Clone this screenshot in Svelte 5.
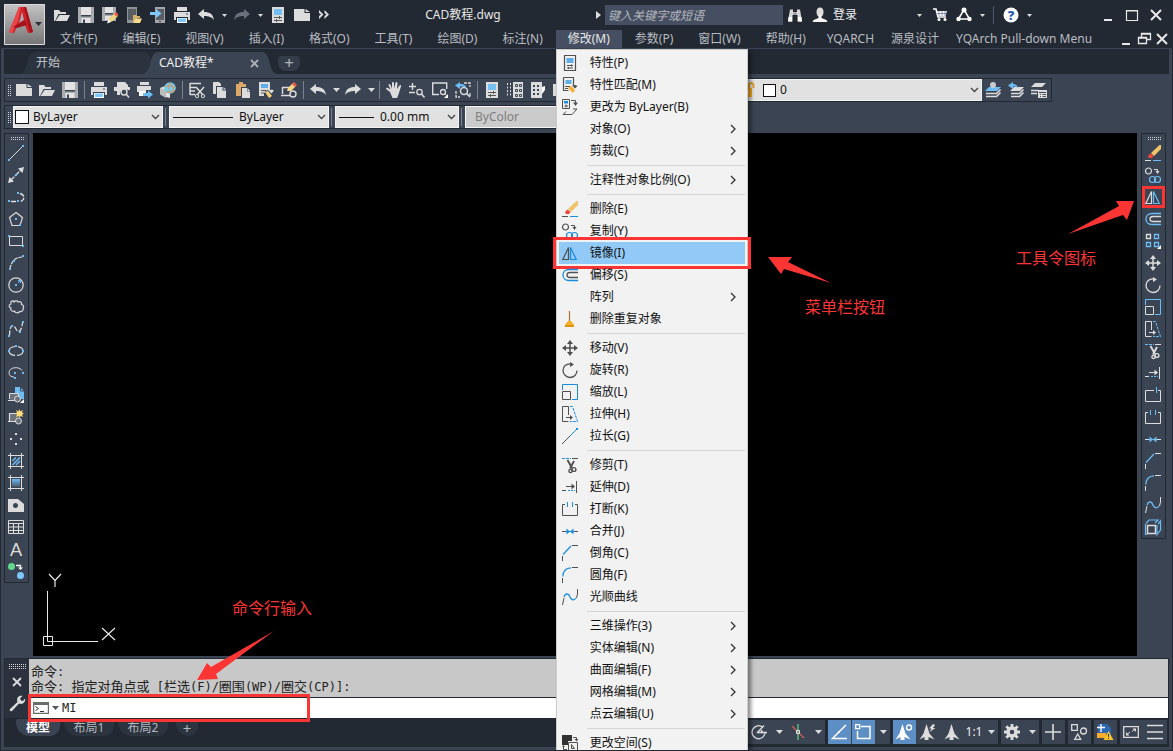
<script>
  const M = 'currentColor';
  const A = 'var(--accent)';
  const line = (d, c = M, extra = '') => `<path d="${d}" fill="none" stroke="${c}" ${extra}/>`;
  const fill = (d, c = M, extra = '') => `<path d="${d}" fill="${c}" ${extra}/>`;
  const dot = (x, y, c = A) => `<rect x="${x}" y="${y}" width="2" height="2" fill="${c}"/>`;

  const scissors =
    line('M5.500 3l4.500 8M12 4l-4 7.500', M, 'stroke-width="1.900"') +
    `<circle cx="12" cy="12.500" r="1.900" fill="none" stroke="${M}" stroke-width="1.400"/><circle cx="8.500" cy="14" r="1.600" fill="none" stroke="${M}" stroke-width="1.400"/>`;
  const layers =
    fill('M4 5h12l-4 4H0z', A) +
    line('M1 11.500h10.500l4-4M1 14.500h10.500l4-4', M, 'stroke-width="1.600"');

  const icons = {
    new: fill('M0 2h10.500v4H16v8H0z') + fill('M11.500 2L16 5h-4.500z'),
    open: fill('M0 14V3h5l1.500 2H12v2H4.500L1 14z') + fill('M5.500 8H16l-3 6H1.500z'),
    save: fill('M0 0h16v16H0z', '#a9abae') + fill('M3 0h10v8H3z', '#e3e3e3') + fill('M3 8h10v1.500H3z', '#3b4453') + fill('M3.500 11h9v5h-9z', '#e3e3e3') + fill('M5 12.500h2V16H5z', '#3b4453'),
    saveas: fill('M0 0h14v14H0z', '#a9abae') + fill('M3 0h8v6H3z', '#e3e3e3') + fill('M3 6h8v1.500H3z', '#3b4453') + fill('M3 9h6v4H3z', '#e3e3e3') + fill('M6 15.500l1-4 6-5.500 3 3-6 5.500z', '#f2d583') + fill('M12 7l2-2 2.500 2.500-2 2z', '#f0584c') + fill('M5 16.500l1.500-4 2.500 2.500z', '#fff'),
    openweb: fill('M1 0h10v16H1z', '#8f9296') + fill('M2 2h8v11H2z', '#5a5d62') + fill('M7 16V8h3l1 1h3v2h-4z', '#d8b06a') + fill('M9.500 11.500H16L14 16H7.500z', '#ffdf8e'),
    saveweb: fill('M5 0h10v16H5z', '#a2a5a9') + fill('M6 2h8v11H6z', '#5a5d62') + fill('M0 5h6V2l5.500 4.500L6 11V8H0z', '#7cc8ff') + fill('M9 14h2v1H9z', '#3b4453'),
    print: fill('M3 0h10v4H3z') + fill('M0 5h16v8h-2v-3H2v3H0z') + fill('M3 11h10v5H3z', '#fff') + fill('M4 11.500h8V15H4z', '#7cc8ff') + fill('M12 6.500h2v1h-2z', '#3b4453'),
    undo: fill('M0 7l6-5v3c6 0 9 2 10 8-2.500-3-5-4-10-4v3z'),
    redo: fill('M16 7l-6-5v3C4 5 1 7 0 13c2.500-3 5-4 10-4v3z'),
    props: fill('M2 0h12v16H2z') + fill('M4 2h8v6H4z', '#74c0f5') + line('M4 10.500h8M4 13.500h8', '#555') + fill('M9 9h1v3H9zM6 12h1v3H6z', '#555'),
    more: fill('M1 3l4.500 4.500L1 12V9l2-1.500L1 6zM6.500 3L11 7.500 6.500 12V9l2-1.500-2-1.500z'),
    preview: fill('M3 0h8l3 3v2h2v3h-2a5 5 0 0 0-8 3v2H3V9H0V5h3z') + `<circle cx="10" cy="10" r="3" fill="#3b4453" stroke="${M}" stroke-width="1.400"/>` + line('M12 12l3 3.500', M, 'stroke-width="1.600"'),
    publish: fill('M3 0h9v3H3z') + fill('M0 4h14v4H9v2H0z') + fill('M2 9h7v5H2z', '#fff') + fill('M6 11h5V8.500l5 4-5 4V14H6z', '#6cbcf5'),
    globe: fill('M0 6l5-2 5 4v8l-4-1-6-3z', '#e3e3e3') + fill('M0 6l6 2v8l-6-3.500z', '#bcbcbc') + `<circle cx="10" cy="6" r="5.800" fill="#6fd0ee"/>` + line('M5 5c4-2 8-1 10.500 1M6 10c4 1 7 0 9-2M10 1c-2 4-2 7 1 10M10 1c4 3 4 7 2 10', '#e88d5a'),
    cut: line('M1 1.500h11M1 5.500h6M1 9h5M1 12.500h5M1 1v12', M, 'stroke-width="1.400"') + line('M7 5l7 8M15 5l-7 8', M, 'stroke-width="1.500"') + `<circle cx="8" cy="14" r="1.700" fill="none" stroke="${M}"/><circle cx="14" cy="14" r="1.700" fill="none" stroke="${M}"/>`,
    copyclip: fill('M1 0h6l2 2v2H4v8H1z') + fill('M5 5h5.500v3.500H14V16H5z') + fill('M11.500 5l2.500 2.500h-2.500z'),
    paste: fill('M1 2h3V0h4v2h3v3H6v9H1z', '#dba868') + fill('M7 6h5v3.500h3V16H7z') + fill('M12.500 6l2.500 3h-2.500z'),
    match: line('M1.500.5h10v8M1.500.5v13h5', M, 'stroke-width="1.200"') + fill('M3.500 3h6v4h-6z', '#5faee8') + line('M3 9.500h5M3 11.500h3', M) + fill('M6 11l3-2 4 4-2 3z', '#f9ac2b') + fill('M10 8.500l3 3L15.500 9l-2-1z'),
    matchdark: fill('M1 0h11v9L9 8 6 11v3H1z') + fill('M3 2h7v4H3z', '#5faee8') + line('M3 8.500h5M3 11h3', '#555') + fill('M7 10l3-1 4 5-3 2z', '#f7d07a') + fill('M10.500 8.500l3 3 2.500-3-2-1z'),
    blockedit: line('M1.500 12V5.500H9M0 13.500h10', M, 'stroke-width="1.400"') + `<circle cx="12" cy="12" r="3" fill="none" stroke="${M}" stroke-width="1.400"/>` + fill('M6 9l1-3 5-5 3 3-5 5z', '#f7d68a') + fill('M11 2l2-2 3 3-2 2z', '#f0584c'),
    pan: fill('M4 10L0 7c0-1 1-1.500 2-1l2.500 1.500L2.500 3c0-1.500 1.500-1.500 2 0L6 6.500V1c0-1.500 2-1.500 2 0v5.500L9.500 1c.5-1.500 2-1 2 .5L11 7l2.500-3.500c1-1 2 0 1.500 1l-2.500 8L11 16H6.500z'),
    zoomrt: line('M0 4.500h7M3.500 1v7M0 10.500h6', M, 'stroke-width="1.400"') + `<circle cx="10.500" cy="10" r="2.700" fill="none" stroke="${M}" stroke-width="1.300"/>` + line('M12.500 12l3 3.500', M, 'stroke-width="1.600"'),
    zoomwin: line('M7 12.500H.7V1h14v6', M, 'stroke-width="1.400"') + `<circle cx="11" cy="10" r="2.500" fill="none" stroke="${M}" stroke-width="1.300"/>` + fill('M16 12v4h-4z', '#fff') + line('M12.500 11.500l2 2'),
    zoomprev: line('M9 1h6v4M1 9v6h4M15 11v4', M, 'stroke-width="1.300" stroke-dasharray="3 1"') + `<circle cx="9" cy="9" r="3.500" fill="none" stroke="${M}" stroke-width="1.500"/>` + line('M11.500 11.500L15 15', M, 'stroke-width="1.600"') + fill('M0 3.500L5 0v2c4 0 6 1 6 4-2-1.500-3-1.500-6-1.500V7z', '#6cbcf5'),
    palette: line('M.500 1v14M3.500 1v14', M, 'stroke-dasharray="2 1.500"') + fill('M6 0h10v16H6z') + `<g fill="none" stroke="#3b4453"><path d="M8.500 2.500h2v2h-2zM12.500 2.500h2v2h-2zM8.500 7.500h2v2h-2zM12.500 7.500h2v2h-2zM8.500 12.500h2v2h-2zM12.500 12.500h2v2h-2z"/></g>`,
    design: fill('M1 0h11v16H1z') + fill('M3 3h2v2H3zM7 3h2v2H7zM3 7h2v2H3zM7 7h2v2H7zM3 11h2v2H3zM7 11h2v2H7z', '#3b4453') + fill('M12 5l3-1v4l-3 4z', '#fff'),
    layerstate: layers + `<circle cx="8" cy="3" r="3" fill="#c9cccf"/>`,
    layerprev: fill('M6 5h10l-4 4H2z') + line('M3 11.500h8.500l4-4M3 14.500h8.500l4-4', M, 'stroke-width="1.600"') + fill('M0 3.500L5 0v2c3 0 4 1 5 4-2-1.500-3-1.500-5-1.500V7z', '#6cbcf5'),
    layerprops: fill('M4 1h11l-4 4H0z') + line('M0 8.500h8M0 11.500h6', M, 'stroke-width="1.600"') + fill('M7 8h9v8H7z') + line('M8 10.500h7', '#3b4453') + line('M9 12.500h1M11.500 12.500H15M9 14.500h1M11.500 14.500H15', '#555'),
    line: line('M2 14L14 2') + dot(0, 14) + dot(14, 0),
    xline: line('M2 14L14 2', M, 'stroke-width="1.300" stroke-dasharray="6 1"') + fill('M0 16l1.500-6L6 14.500zM16 0l-1.500 6L10 1.500z') + dot(7, 7),
    pline: line('M3 12.500h6M12 4.500c5 1 5 7 0 8', M, 'stroke-width="1.300" stroke-dasharray="5 1"') + dot(0, 11) + dot(9, 3) + dot(9, 11),
    polygon: line('M8 1.500l6.500 5-2.500 8H4L1.500 6.500z', M, 'stroke-width="1.200"') + dot(7, 7) + dot(11, 13),
    rect: line('M1.500 3.500h13v9h-13z') + dot(0, 2) + dot(14, 12),
    arc: line('M2 14C3 7 7 2 14.500 2', M, 'stroke-width="1.200" stroke-dasharray="4 1"') + dot(1, 13) + dot(5, 5) + dot(14, 0),
    circle: `<circle cx="8" cy="8" r="7.200" fill="none" stroke="${M}" stroke-width="1.200"/>` + dot(7, 7) + line('M10 6l2-2', A) + fill('M9.500 3H13v3.500z', A),
    cloud: line('M3 5C2 2 5 1 6 3c1-2 4-1 4 0 3-1 4 1 3.500 2.500C16 6 16 8 15 9c1 2-1 4-3 3.500C10 14.500 7 14 6.500 12 4 13 2 11 3 9 .5 8.500.5 5.500 3 5z', M, 'stroke-width="1.200"'),
    spline: line('M1.500 14.500C2 1 6 4 8 8s5 4 6.500-6', M, 'stroke-width="1.300" stroke-dasharray="5 1.500"') + dot(0, 14) + dot(3, 4) + dot(11, 10) + dot(14, 0),
    ellipse: `<ellipse cx="8" cy="8" rx="7" ry="4.500" fill="none" stroke="${M}" stroke-width="1.200" stroke-dasharray="8 2 7 2 8 2"/>` + dot(7, 2) + dot(0, 7) + dot(14, 7),
    ellipsearc: line('M14 5.500C11.500 1 1 2 1 7.500c0 3 2 4.500 5 4.500', M) + dot(6, 7) + dot(14, 7) + dot(6, 12),
    insert: fill('M7 0h5l4 4v8H7z', '#6cbcf5') + line('M12.500 0v4H16', '#3b4453') + fill('M2 6h9v7H2z', '#6d737c') + line('M1.500 12V6.500h9V9M0 13.500h8', M) + `<circle cx="9.500" cy="12" r="3" fill="#6d737c" stroke="${M}"/>` + fill('M16 12v4h-4z', '#fff'),
    block: fill('M2 5h8v7H2z', '#6d737c') + line('M1.500 12V4.500h7M0 12.500h8', M, 'stroke-width="1.200"') + `<circle cx="10.500" cy="12" r="3" fill="#6d737c" stroke="${M}"/>` + fill('M11.500 0l1 2.500L15 1l-1 2.500 2 1-2 1 1 2.500-2.500-1-1 2-1-2L8 8l1-2.500-2-1 2-1L8 1l2.500 1.500z', '#ffdb7c'),
    point: dot(7, 2, M) + dot(2, 7, M) + dot(12, 7, M) + dot(7, 12, M),
    hatch: line('M2.500 0v16M13.500 0v16M0 2.500h16M0 13.500h16') + line('M4.500 8L8 4.500M4.500 12L12 4.500M8 12l4-4', A, 'stroke-width="1.600"'),
    gradient: `<defs><linearGradient id="gr" x2="0" y2="1"><stop stop-color="#6cbcf5"/><stop offset="1" stop-color="#4b5563"/></linearGradient></defs>` + line('M2.500 0v16M13.500 0v16M0 2.500h16M0 13.500h16') + fill('M4 4h8v8H4z', 'url(#gr)'),
    region: `<path fill-rule="evenodd" fill="${M}" d="M0 2h10l6 5v8H0zM7.500 6a2.500 2.500 0 1 0 .01 0z"/>`,
    table: line('M.5 1.500h15v13H.5zM0 4.500h16M0 8h16M0 11.500h16M5.500 5v9M10.500 5v9'),
    mtext: `<text x="8" y="15" text-anchor="middle" font-family="Lato, sans-serif" font-size="18" fill="${M}">A</text>`,
    addsel: `<circle cx="3.500" cy="3.500" r="3.500" fill="#62d98b"/><circle cx="12.500" cy="12.500" r="3.500" fill="#7cc8ff"/>` + line('M8 2.500h4.500V5', '#fff', 'stroke-width="1.300"') + fill('M10 4.500h5L12.500 7z', '#fff'),
    erase: fill('M14.500 0H16v4l-7 7-3-3z', '#f2c469') + fill('M5.500 8.500L8.500 11 7 13H4L3 11z', '#f0473d') + line('M0 15.500h6') + line('M8 15.500h8', A),
    copy: `<circle cx="3.500" cy="4" r="3" fill="none" stroke="${M}" stroke-width="1.200"/><circle cx="7.500" cy="12.500" r="3" fill="none" stroke="${A}" stroke-width="1.200"/><circle cx="12.500" cy="12.500" r="3" fill="none" stroke="${A}" stroke-width="1.200"/>` + line('M9 2.500h3.500v2') + fill('M10.500 4h4L12.500 7z'),
    mirror: line('M6.500 2.500v12H.8z', M, 'stroke-width="1.200"') + line('M8.500 2.500v12h5.700z', A, 'stroke-width="1.200"'),
    offset: line('M16 2.500H7c-8 0-8 11 0 11h9', A, 'stroke-width="1.300"') + line('M16 5.500H8c-4 0-4 5 0 5h8', M, 'stroke-width="1.300"'),
    array: line('M1.500 1.500h4v4h-4z', M, 'stroke-width="1.300"') + line('M9.500 1.500h4v4h-4zM1.500 9.500h4v4h-4zM9.500 9.500h4v4h-4z', A, 'stroke-width="1.300"') + fill('M16 12v4h-4z', '#fff'),
    move: line('M8 2v12M2 8h12', M, 'stroke-width="1.500"') + fill('M8 0l3 4H5zM8 16l3-4H5zM0 8l4-3v6zM16 8l-4-3v6z'),
    rotate: line('M9.500 2C4 1 1 5 1 8.500S4 15.500 8 15.500s7-3 7-7', M, 'stroke-width="1.300"') + fill('M8 0l4 2.500L8 5z'),
    scale: line('M.5 6V.5h15v15H10', A) + line('M.5 7.500h8v8h-8z'),
    stretch: line('M6.500 9V.5h-6v15h6') + line('M8 .5h2.500l5 15H8', A, 'stroke-dasharray="3 1"') + line('M4 11.500h6') + fill('M8 9l3 2.500L8 14z'),
    lengthen: line('M0 16l8-8') + line('M8 8l6-6', A) + dot(14, 0),
    trim: line('M0 1.500h9', A, 'stroke-dasharray="3 1"') + line('M10 1.500h6') + scissors,
    extend: line('M0 11.500h4M4 7.500h7M14.500 2v12') + line('M6 11.500h7', A, 'stroke-dasharray="2 1"') + fill('M9.500 4.500L13 7.500l-3.500 3z'),
    breakpt: line('M9 3.500H.5v11h15v-11H13') + line('M11.500 0v6', A),
    break: line('M3 3.500H.5v11h15v-11H13') + line('M5.500 1v5M10.500 1v5', A),
    join: line('M0 8.500h4M12 8.500h4') + line('M4 8.500h8', A) + fill('M4.500 5.500L8 8.500l-3.500 3zM11.500 5.500L8 8.500l3.500 3z', A),
    chamfer: line('M.5 16v-5M10 .5h6') + line('M1 9.500L9 1', A, 'stroke-width="1.200"'),
    fillet: line('M.5 16v-5M10 .5h6') + line('M.8 9.500C1 4 4 1 9 .8', A, 'stroke-width="1.200"'),
    blend: line('M.5 16L2 9M15.500 0v5l-1 4') + line('M2 8c2-5 5-3 6 0s4 4 6 1', A, 'stroke-width="1.300"'),
    explode: line('M2.500 6.500h8v8h-8z', M, 'stroke-width="1.500"') + line('M.500 5v10.500H2M1 4.500L4 1h9l-3 3M13 5l2.500-3v9L12 15.500V6', A, 'stroke-width="1.200"'),
    bylayer: line('M.5.500h7v9h-7z') + fill('M2 2h4v2.500H2z', '#1a8ce0') + line('M2.500 7h3.500M4 5.500v3') + line('M9 1.500h4.500V4') + fill('M11 3.500h5L13.500 7z') + line('M4 12.500L1 15.500h9l5-5.500h-4'),
    purge: line('M7.500 0v10', '#a86f3c', 'stroke-width="1.200"') + fill('M6 10h3l3 4H3z', '#f7b023') + fill('M3 14h9v2H3z', '#dd9410'),
    chspace: fill('M0 0h10v6H6v4H0z', '#333') + line('M6.500 7.500h9v8h-9z') + line('M9.500 13.500V9.500l3 4zM11 2.500h3.500V6M1.500 11v3.500H5') + fill('M12.500 4h4L14.500 6.500zM0 12h3L1.500 10z'),
    mprops: line('M2.500.5h11v15h-11z', M, 'stroke-width="1.200"') + fill('M4.500 3h7v5h-7z', '#5faee8') + line('M5 10.500h6M5 13h6M9.500 9.500v2M6.500 12v2'),
    polar: line('M12 3.500A6.500 6.500 0 1 0 14 9', M, 'stroke-width="1.300"') + line('M6 9L13 1.500M6 8.500h10', M, 'stroke-width="1.300"') + fill('M9 5l3 2-1 3z'),
    iso: line('M2 2l12 12', '#d0605f', 'stroke-width="1.300"') + line('M8 0v16', '#5ecb8a', 'stroke-width="1.300"') + line('M6.500 6.500h3v3h-3z', '#e3e3e3'),
    otrack: line('M15 1L1.500 14.500H16', '#fff', 'stroke-width="1.500"') + dot(7, 7, '#fff'),
    osnap: line('M6 2.500h9v12H2.500V7', '#fff', 'stroke-width="1.500"') + line('M.7.700h4v4h-4z', '#fff', 'stroke-width="1.300"'),
    annovis: fill('M6.500 0L9.500 9.500l5 6-6-2.500v3h-4v-3L-.500 15.500l4-6z') + `<circle cx="13" cy="3.500" r="2.500" fill="none" stroke="${M}" stroke-width="1.400"/>`,
    annoauto: fill('M6.500 0L9.500 9.500l5 6-6-2.500v3h-4v-3L-.500 15.500l4-6z') + fill('M13 0l-4 4.500h2.500L9.500 8 15.500 4H13l2-3z'),
    anno: fill('M7.500 0L10.500 9.500l5 6-6-2.500v3h-4v-3L.500 15.500l4-6z'),
    gear: `<circle cx="8" cy="8" r="4" fill="none" stroke="${M}" stroke-width="3.500"/>` + line('M8 0v4M8 12v4M0 8h4M12 8h4M2.300 2.300l2.500 2.500M11.200 11.200l2.500 2.500M2.300 13.700l2.500-2.500M11.200 4.800l2.500-2.500', M, 'stroke-width="2.800"'),
    plus: line('M8 0v16M0 8h16', M, 'stroke-width="1.600"'),
    units: line('M.7.700h5.600v5.600H.7zM3.700 15.300h6L6.700 10z', M, 'stroke-width="1.300"') + `<circle cx="12.500" cy="7" r="3" fill="none" stroke="${M}" stroke-width="1.300"/>`,
    warn: fill('M1 0h9l4 4v10H1z', '#2d68b0') + fill('M0 9h9v5H0z', '#f9ac2b') + line('M4 0v8M0 3.500h8', '#fff', 'stroke-width="1.300"') + fill('M11.500 7l5 9h-10z', '#f8c22b') + fill('M11 10h1v3h-1zM11 14h1v1h-1z', '#333'),
    full: line('M.7 2.700h14.600v10.600H.7z', M, 'stroke-width="1.300"') + line('M4 10.500l3-2.500M9 7.500l3-2.500') + fill('M3 8v3.500h3.500zM13 8V4.500H9.500z'),
    menu: line('M0 1.500h16M0 8h16M0 14.500h16', M, 'stroke-width="1.700"'),
    find: fill('M3 2.500h3V5h4V2.500h3l2 12h-4.500V8h-5v6.500H1z', '#d8d8d8') + fill('M1.500 10h3.500v4.500H1zM11 10h3.500l.5 4.500h-4z', '#fff') + fill('M6.500 5.500h3V8h-3z', '#8d929a'),
    user: `<ellipse cx="8" cy="5" rx="3.500" ry="4.500" fill="#dedede"/>` + fill('M6.500 8h3v3l5 2 1 2H.500l1-2 5-2z', '#f4f4f4'),
    cart: line('M1 2h3l2 8h8', '#fff', 'stroke-width="1.600"') + fill('M4.500 4H15l-1.500 5H6z', '#fff') + line('M7 4v5M10 4v5M13 4v5M5 6.500h10', '#2a3c78', 'stroke-width=".500"') + `<circle cx="7" cy="12.500" r="1.500" fill="#fff"/><circle cx="13" cy="12.500" r="1.500" fill="#fff"/>`,
    exchange: line('M8 2.500L2.500 12h11z', '#fff', 'stroke-width="1.500"') + `<g fill="#fff"><circle cx="8" cy="3" r="2.500"/><circle cx="2.500" cy="12" r="2.200"/><circle cx="13.500" cy="12" r="2.200"/></g>`,
    help: `<circle cx="8" cy="8" r="7.500" fill="#fff"/><text x="8" y="13" text-anchor="middle" font-family="Open Sans, sans-serif" font-weight="800" font-size="13" fill="#2a5bb0">?</text>`,
    min: line('M4 13h8', '#e8e8e8', 'stroke-width="2"'),
    max: line('M2.500 3.500h11v10h-11zM2 4h12', '#e8e8e8', 'stroke-width="1.200"'),
    restore: line('M5.500 6V2.500h9v6H11M2.500 6.500h8v6h-8zM2 7h9M5 3h10', '#e8e8e8', 'stroke-width="1.300"'),
    close: line('M3 3l10 10M13 3L3 13', '#e8e8e8', 'stroke-width="2"'),
    wrench: fill('M1 14L8.500 7C7 3 10 0 13.500 1L11 3.500l1 2 2 .5 2-2.500C17 7 13.500 10 10 8.500L3 16c-1.500 1-3-.5-2-2z'),
    prompt: line('M.6 2.600h14.800v10.800H.6z', '#6b6b6b', 'stroke-width="1.200"') + fill('M0 2h16v3H0z', '#6b6b6b') + line('M2.500 6.500l3 2-3 2M7 11.500h4', '#333'),
    lock: fill('M0 6h9v9H0z', '#f7a91c') + line('M6 6V3c0-2.500 4.500-2.500 4.500 0v3', '#e59a10', 'stroke-width="1.800"') + fill('M4 9h1.500v3H4z', '#fff')
  };

  const quick = [
    ['open', '打开'], ['save', '保存'], ['saveas', '另存为'], ['openweb', '从 Web 打开'], ['saveweb', '保存到 Web'],
    ['print', '打印'], ['undo', '放弃'], 'dd', ['redo', '重做', true], 'dd', ['props', '特性'], ['new', '新建'], ['more', '更多']
  ];
  const standard = [
    ['new', '新建'], ['open', '打开'], ['save', '保存'], '|', ['print', '打印'], ['preview', '打印预览'], ['publish', '发布'],
    ['globe', '三维打印'], '|', ['cut', '剪切'], ['copyclip', '复制'], ['paste', '粘贴'], ['matchdark', '特性匹配'],
    ['blockedit', '块编辑器'], '|', ['undo', '放弃'], 'dd', ['redo', '重做'], 'dd', '|', ['pan', '平移'],
    ['zoomrt', '实时缩放'], ['zoomwin', '窗口缩放'], ['zoomprev', '缩放上一个'], '|', ['props', '特性'],
    ['palette', '设计中心'], ['design', '工具选项板'], ['new', '图纸集']
  ];
  const drawTools = [
    ['line', '直线'], ['xline', '构造线'], ['pline', '多段线'], ['polygon', '多边形'], ['rect', '矩形'], ['arc', '圆弧'],
    ['circle', '圆'], ['cloud', '修订云线'], ['spline', '样条曲线'], ['ellipse', '椭圆'], ['ellipsearc', '椭圆弧'],
    ['insert', '插入块'], ['block', '创建块'], ['point', '点'], ['hatch', '图案填充'], ['gradient', '渐变色'],
    ['region', '面域'], ['table', '表格'], ['mtext', '多行文字'], ['addsel', '添加选定对象']
  ];
  const modifyTools = [
    ['erase', '删除'], ['copy', '复制'], ['mirror', '镜像'], ['offset', '偏移'], ['array', '阵列'], ['move', '移动'],
    ['rotate', '旋转'], ['scale', '缩放'], ['stretch', '拉伸'], ['trim', '修剪'], ['extend', '延伸'], ['breakpt', '打断于点'],
    ['break', '打断'], ['join', '合并'], ['chamfer', '倒角'], ['fillet', '圆角'], ['blend', '光顺曲线'], ['explode', '分解']
  ];
  const menus = [
    '文件(F)', '编辑(E)', '视图(V)', '插入(I)', '格式(O)', '工具(T)', '绘图(D)', '标注(N)', '修改(M)', '参数(P)',
    '窗口(W)', '帮助(H)', 'YQARCH', '源泉设计', 'YQArch Pull-down Menu'
  ];
  const modifyMenu = [
    ['特性(P)', 'mprops'], ['特性匹配(M)', 'match'], ['更改为 ByLayer(B)', 'bylayer'], ['对象(O)', '', true], ['剪裁(C)', '', true], null,
    ['注释性对象比例(O)', '', true], null,
    ['删除(E)', 'erase'], ['复制(Y)', 'copy'], ['镜像(I)', 'mirror'], ['偏移(S)', 'offset'], ['阵列', '', true], ['删除重复对象', 'purge'], null,
    ['移动(V)', 'move'], ['旋转(R)', 'rotate'], ['缩放(L)', 'scale'], ['拉伸(H)', 'stretch'], ['拉长(G)', 'lengthen'], null,
    ['修剪(T)', 'trim'], ['延伸(D)', 'extend'], ['打断(K)', 'break'], ['合并(J)', 'join'], ['倒角(C)', 'chamfer'], ['圆角(F)', 'fillet'], ['光顺曲线', 'blend'], null,
    ['三维操作(3)', '', true], ['实体编辑(N)', '', true], ['曲面编辑(F)', '', true], ['网格编辑(M)', '', true], ['点云编辑(U)', '', true], null,
    ['更改空间(S)', 'chspace']
  ];
  const statusGroups = [
    [['polar', '极轴追踪'], 'dd', ['iso', '等轴测草图'], 'dd'],
    [['otrack', '对象捕捉追踪', true], ['osnap', '对象捕捉', true], 'dd'],
    [['annovis', '注释可见性', true], ['annoauto', '自动缩放'], ['anno', '注释比例'], '1:1', 'dd'],
    [['gear', '切换工作空间'], 'dd'],
    [['plus', '注释监视器']],
    [['units', '隔离对象']],
    [['warn', '硬件加速']],
    [['full', '全屏显示'], ['menu', '自定义']]
  ];

  let openMenu = $state('修改(M)');
  let hovered = $state('镜像(I)');
  let command = $state('MI');
</script>

{#snippet icon(name)}
  <svg class="icon" viewBox="0 0 16 16" width="16" height="16" aria-hidden="true">{@html icons[name]}</svg>
{/snippet}

{#snippet caret()}
  <svg class="caret" viewBox="0 0 7 4" width="7" height="4" aria-hidden="true"><path d="M0 0h7L3.500 4z" fill="currentColor" /></svg>
{/snippet}

{#snippet chevron()}
  <svg class="chev" viewBox="0 0 9 6" width="9" height="6" aria-hidden="true"><path d="M1 1l3.500 3.500L8 1" fill="none" stroke="#444" stroke-width="1.300" /></svg>
{/snippet}

{#snippet tools(items)}
  {#each items as item}
    {#if item === '|'}
      <span class="divider"></span>
    {:else if item === 'dd'}
      <button class="drop" aria-label="展开">{@render caret()}</button>
    {:else}
      <button class="tool" class:dim={item[2]} aria-label={item[1]}>{@render icon(item[0])}</button>
    {/if}
  {/each}
{/snippet}

{#snippet slope(flip, color)}
  <svg class="slope" class:flip viewBox="0 0 16 22" width="16" height="22" aria-hidden="true"><path d="M0 22C9 20 6 1 14 0h2v22z" fill={color} /></svg>
{/snippet}

<div class="app">
  <header>
    <button class="logo" aria-label="应用程序菜单">
      <svg viewBox="0 0 41 41" width="41" height="41" aria-hidden="true">
        <defs>
          <linearGradient id="plate" x2="0" y2="1"><stop stop-color="#c4c4c4" /><stop offset="1" stop-color="#747474" /></linearGradient>
        </defs>
        <path d="M0 0h41v41H0z" fill="url(#plate)" />
        <path d="M.5.5h40v40H.5z" fill="none" stroke="#dcdcdc" />
        <path fill-rule="evenodd" d="M15 3h7l7 25-5 1-3-8-8 2-3 6-5-1zM18 8l-3 11 5-3z" fill="#cf2229" />
        <path d="M15 3h2l-3 14-6 12-3-1z" fill="#e8474b" />
        <path d="M9 23l12-7 2 5-10 3z" fill="#a3131c" />
        <path d="M20 3h2l7 25-3 1z" fill="#a3131c" />
        <path d="M31 18h7l-3.500 4z" fill="#2b2f3a" />
      </svg>
    </button>
    <div class="head-main">
      <div class="title-row">
        <div class="quick">{@render tools(quick)}</div>
        <h1>CAD教程.dwg</h1>
        <span class="pointer"></span>
        <input class="search" type="text" placeholder="键入关键字或短语" aria-label="搜索" />
        <button class="tool" aria-label="查找">{@render icon('find')}</button>
        <button class="login"><span class="login-icon">{@render icon('user')}</span>登录</button>
        <button class="drop login-drop" aria-label="登录选项">{@render caret()}</button>
        <button class="tool" aria-label="应用商店">{@render icon('cart')}</button>
        <button class="tool" aria-label="连接">{@render icon('exchange')}</button>
        <button class="drop" aria-label="连接选项">{@render caret()}</button>
        <span class="rule"></span>
        <button class="tool" aria-label="帮助">{@render icon('help')}</button>
        <button class="drop" aria-label="帮助选项">{@render caret()}</button>
        <div class="window">
          <button class="tool" aria-label="最小化">{@render icon('min')}</button>
          <button class="tool" aria-label="最大化">{@render icon('max')}</button>
          <button class="tool" aria-label="关闭">{@render icon('close')}</button>
        </div>
      </div>
      <nav class="menubar">
        {#each menus as name, i}
          <div class="menu" class:extra={i > 11}>
            <button class="menu-name" class:open={openMenu === name} onclick={() => (openMenu = openMenu === name ? '' : name)}>{name}</button>
            {#if name === '修改(M)' && openMenu === name}
              <div class="dropdown" role="menu">
                {#each modifyMenu as entry}
                  {#if entry === null}
                    <hr />
                  {:else}
                    <button class="entry" role="menuitem" class:hot={hovered === entry[0]} onmouseenter={() => (hovered = entry[0])}>
                      <span class="glyph">{#if entry[1]}{@render icon(entry[1])}{/if}</span>
                      <span class="label">{entry[0]}</span>
                      {#if entry[2]}
                        <svg viewBox="0 0 6 10" width="6" height="10" aria-hidden="true"><path d="M1 1l4 4-4 4" fill="none" stroke="#333" stroke-width="1.300" /></svg>
                      {/if}
                      {#if entry[0] === '镜像(I)'}<span class="frame"></span>{/if}
                    </button>
                  {/if}
                {/each}
              </div>
            {/if}
          </div>
        {/each}
        <div class="doc-window">
          <button aria-label="最小化图形">{@render icon('min')}</button>
          <button aria-label="还原图形">{@render icon('restore')}</button>
          <button aria-label="关闭图形">{@render icon('close')}</button>
        </div>
      </nav>
    </div>
  </header>

  <div class="doc-tabs">
    <div class="doc-tab first">{@render slope(false, '#2b333f')}<button>开始</button>{@render slope(true, '#2b333f')}</div>
    <div class="doc-tab active">
      {@render slope(false, '#3b4453')}<button>CAD教程*</button>
      <button class="tab-close" aria-label="关闭标签"><svg viewBox="0 0 9 9" width="9" height="9"><path d="M1 1l7 7M8 1L1 8" stroke="#aeb2b8" stroke-width="1.800" /></svg></button>
      {@render slope(true, '#3b4453')}
    </div>
    <button class="add-tab" aria-label="新图形">+</button>
  </div>

  <div class="bars">
    <div class="bar standard"><span class="grip"></span>{@render tools(standard)}</div>
    <div class="bar layer">
      <span class="grip"></span>
      <div class="combo wide">
        <select aria-label="图层"><option>0</option></select>
        <span class="deco">{@render icon('lock')}<i class="swatch"></i></span>
        {@render chevron()}
      </div>
      {@render tools([['layerstate', '置为当前'], ['layerprev', '上一个图层'], ['layerprops', '图层特性']])}
    </div>
  </div>

  <div class="bars">
    <div class="bar properties">
      <span class="grip"></span>
      <div class="combo color">
        <select aria-label="颜色"><option>ByLayer</option></select>
        <span class="deco"><i class="swatch big"></i></span>
        {@render chevron()}
      </div>
      <span class="divider"></span>
      <div class="combo ltype">
        <select aria-label="线型"><option>ByLayer</option></select>
        <span class="deco"><i class="stroke"></i></span>
        {@render chevron()}
      </div>
      <span class="divider"></span>
      <div class="combo weight">
        <select aria-label="线宽"><option>0.00 mm</option></select>
        <span class="deco"><i class="stroke"></i></span>
        {@render chevron()}
      </div>
      <span class="divider"></span>
      <div class="combo plot">
        <select aria-label="打印样式" disabled><option>ByColor</option></select>
        {@render chevron()}
      </div>
    </div>
  </div>

  <main>
    <div class="side"><span class="grip flat"></span>{@render tools(drawTools)}</div>
    <section class="canvas" aria-label="绘图区">
      <svg class="ucs" viewBox="0 0 76 78" width="76" height="78" aria-hidden="true">
        <g fill="none" stroke="#e8e8e8">
          <path d="M1.500 65.500h9v9h-9zM5.500 70.500V20M5.500 70.500H56" />
          <path d="M7 3l6 6.500L19 3M13 9.500V16M60 57l13 12M73 57L60 69" stroke-width="1.200" />
        </g>
      </svg>
    </section>
    <div class="side right">
      <span class="grip flat"></span>
      {#each modifyTools as [name, label]}
        <button class="tool" class:marked={name === 'mirror'} aria-label={label}>{@render icon(name)}</button>
      {/each}
    </div>
  </main>

  <section class="command">
    <div class="command-side">
      <span class="grip flat"></span>
      <button aria-label="关闭命令行"><svg viewBox="0 0 10 10" width="10" height="10"><path d="M1 1l8 8M9 1L1 9" stroke="#dcdcdc" stroke-width="1.800" /></svg></button>
      <button aria-label="自定义命令行">{@render icon('wrench')}</button>
    </div>
    <div class="command-main">
      <div class="history">
        <p><span>命令</span>:</p>
        <p><span>命令</span>: <span>指定对角点或</span> [<span>栏选</span>(F)/<span>圈围</span>(WP)/<span>圈交</span>(CP)]:</p>
      </div>
      <div class="entry-line">
        {@render icon('prompt')}
        <span class="recent">{@render caret()}</span>
        <input type="text" aria-label="命令" bind:value={command} />
      </div>
    </div>
    <span class="frame command-frame"></span>
  </section>

  <footer>
    <div class="layouts">
      <button class="layout current">模型</button>
      <button class="layout">布局1</button>
      <button class="layout">布局2</button>
      <button class="layout add" aria-label="新建布局">+</button>
    </div>
    <div class="status">
      {#each statusGroups as group}
        <div class="group">
          {#each group as item}
            {#if item === 'dd'}
              <button class="drop" aria-label="展开">{@render caret()}</button>
            {:else if typeof item === 'string'}
              <button class="ratio">{item}</button>
            {:else}
              <button class="cell" class:on={item[2]} aria-label={item[1]}>{@render icon(item[0])}</button>
            {/if}
          {/each}
        </div>
      {/each}
    </div>
  </footer>

  <div class="note note-menu">
    <svg viewBox="0 0 66 32" width="66" height="32" aria-hidden="true"><path d="M1 2l24 0-4 5 43 21-47-14-3 5z" /></svg>
    <span>菜单栏按钮</span>
  </div>
  <div class="note note-tool">
    <svg viewBox="0 0 70 36" width="70" height="36" aria-hidden="true"><path d="M68 2L50 2l3 5L2 35l55-19 4 5z" /></svg>
    <span>工具令图标</span>
  </div>
  <div class="note note-command">
    <span>命令行输入</span>
    <svg viewBox="0 0 78 52" width="78" height="52" aria-hidden="true"><path d="M1 50l10-17 4 4L78 1 20 44l2 5z" /></svg>
  </div>
</div>

<style>
  :global(body) {
    margin: 0;
    background: #222933;
  }

  .app {
    --ui: 'Noto Sans', 'Noto Sans CJK SC', sans-serif;
    --dark: #222933;
    --frame: #3b4453;
    --red: #fa3533;
    --accent: #6cbcf5;
    position: relative;
    box-sizing: border-box;
    display: flex;
    flex-direction: column;
    height: 100vh;
    overflow: hidden;
    border: 1px solid var(--dark);
    border-top: 0;
    background: var(--frame);
    color: #dcdcdc;
    font: 12px/16px var(--ui);
  }

  button,
  input,
  select {
    margin: 0;
    padding: 0;
    border: 0;
    border-radius: 0;
    background: none;
    color: inherit;
    font: inherit;
    outline: none;
  }

  button {
    display: flex;
    align-items: center;
    justify-content: center;
    white-space: nowrap;
  }

  svg {
    display: block;
    flex: none;
    overflow: visible;
  }

  header {
    display: flex;
    flex: none;
    height: 48px;
    background: var(--dark);
  }

  .logo {
    flex: none;
    align-self: flex-start;
    margin: 4px 0 0 3px;
  }

  .head-main {
    flex: 1;
    min-width: 0;
  }

  .title-row {
    display: flex;
    align-items: center;
    height: 30px;
    padding: 0 4px 0 5px;
  }

  .quick {
    display: flex;
    flex: none;
  }

  .tool {
    flex: none;
    width: 24px;
    height: 22px;
  }

  .tool.dim {
    color: #6b717c;
  }

  .drop {
    flex: none;
    width: 12px;
  }

  .title-row .caret {
    width: 5px;
    height: 3px;
  }

  h1 {
    flex: 1;
    margin: 0;
    padding-right: 8px;
    font: inherit;
    text-align: center;
    color: #e6e6e6;
    white-space: nowrap;
  }

  .pointer {
    margin-right: 4px;
    border: 4px solid transparent;
    border-right: 0;
    border-left: 5px solid #dcdcdc;
  }

  .search {
    flex: none;
    box-sizing: border-box;
    width: 178px;
    height: 20px;
    padding: 0 3px;
    background: #454f61;
  }

  .search::placeholder {
    color: #b4b8be;
    font-style: italic;
    opacity: 1;
  }

  .login {
    flex: none;
    justify-content: flex-start;
    width: 106px;
    color: #f0f0f0;
  }

  .login-icon {
    display: flex;
    justify-content: center;
    width: 26px;
  }

  .login-drop {
    margin-right: 3px;
  }

  .rule {
    flex: none;
    width: 1px;
    height: 18px;
    margin: 0 5px;
    background: #4f5b70;
  }

  .window {
    display: flex;
    margin-left: 61px;
  }

  .menubar {
    display: flex;
    gap: 1px;
    height: 18px;
    padding: 0 2px 0 3px;
    color: #b9bcc1;
  }

  .menu {
    position: relative;
    flex: none;
  }

  .menu-name {
    height: 18px;
    padding: 0 12px;
  }

  .extra .menu-name {
    padding: 0 8px;
  }

  .menu-name.open {
    background: #454f61;
    color: #e6e6e6;
  }

  .doc-window {
    display: flex;
    gap: 2px;
    margin-left: auto;
  }

  .dropdown {
    --accent: #1a8ce0;
    position: absolute;
    top: 19px;
    left: 0;
    z-index: 10;
    box-sizing: border-box;
    width: 192px;
    padding: 2px;
    border: 1px solid #ccc;
    background: #f2f2f2;
    box-shadow: 3px 3px 4px rgba(0, 0, 0, 0.45);
    color: #111;
  }

  .dropdown hr {
    height: 1px;
    margin: 3px 0 3px 28px;
    border: 0;
    background: #d5d5d5;
  }

  .entry {
    position: relative;
    gap: 12px;
    width: 100%;
    height: 22px;
    padding: 0 9px 0 3px;
  }

  .entry.hot {
    background: #91c9f7;
  }

  .glyph {
    width: 16px;
    color: #505050;
  }

  .label {
    flex: 1;
    text-align: left;
  }

  .frame {
    position: absolute;
    inset: -5px -6px;
    border: 3px solid var(--red);
    pointer-events: none;
  }

  .doc-tabs {
    display: flex;
    flex: none;
    align-items: flex-end;
    height: 22px;
    margin: 1px 3px 4px;
    padding-top: 3px;
    background: var(--dark);
  }

  .doc-tab {
    display: flex;
    align-items: center;
  }

  .doc-tab.first {
    width: 139px;
    margin-left: 16px;
    color: #c3c6ca;
  }

  .doc-tab.first button {
    flex: 1;
    align-self: stretch;
    justify-content: flex-start;
    background: #2b333f;
  }

  .doc-tab.active {
    z-index: 1;
    width: 134px;
    margin-left: -16px;
    color: #f0f0f0;
  }

  .doc-tab.active button {
    align-self: stretch;
    background: var(--frame);
  }

  .doc-tab.active .tab-close {
    flex: 1;
    justify-content: flex-end;
    padding-right: 2px;
  }

  .slope.flip {
    transform: scaleX(-1);
  }

  .add-tab {
    align-self: center;
    width: 22px;
    height: 15px;
    margin-left: 1px;
    border-radius: 3px 4px 8px 8px;
    background: #343c49;
    color: #aeb2b8;
    font-size: 17px;
  }

  .bars {
    display: flex;
    flex: none;
    margin: 0 3px 3px;
  }

  .bar {
    display: flex;
    align-items: center;
    box-sizing: border-box;
    height: 24px;
    border: 1px solid var(--dark);
  }

  .bar .tool {
    width: 23px;
  }

  .bar .tool,
  .side .tool {
    padding-right: 1px;
  }

  .grip {
    --gap: var(--frame);
    flex: none;
    width: 4px;
    height: 13px;
    margin: 0 2px;
    background:
      linear-gradient(var(--gap) 1px, transparent 1px) 0 0 / 2px 2px,
      linear-gradient(90deg, var(--gap) 1px, transparent 1px) 0 0 / 2px 2px,
      #d4d6d9;
  }

  .grip.flat {
    width: 14px;
    height: 4px;
    margin: 2px 0;
  }

  .divider {
    flex: none;
    width: 1px;
    height: 18px;
    margin: 0 3px 0 2px;
    background: #7b828e;
  }

  .standard {
    padding-right: 20px;
  }

  .layer {
    margin-left: 37px;
  }

  .combo {
    display: grid;
    align-items: center;
    height: 22px;
    background: #e1e1e1;
    box-shadow: inset 0 0 0 1px #f4f4f4;
    color: #111;
  }

  .combo > :global(*) {
    grid-area: 1 / 1;
  }

  .combo select {
    width: 100%;
    height: 22px;
    appearance: none;
    opacity: 1;
  }

  .deco {
    display: flex;
    align-items: center;
    gap: 4px;
    padding-left: 2px;
    pointer-events: none;
  }

  .chev {
    justify-self: end;
    margin-right: 3px;
    pointer-events: none;
  }

  .swatch {
    width: 11px;
    height: 11px;
    border: 1px solid #111;
    background: #fff;
  }

  .swatch.big {
    width: 12px;
    height: 12px;
  }

  .wide {
    width: 342px;
  }

  .wide .deco {
    padding-left: 103px;
  }

  .wide select {
    padding-left: 140px;
  }

  .color {
    width: 150px;
  }

  .color select {
    padding-left: 20px;
  }

  .ltype {
    width: 160px;
  }

  .ltype select {
    padding-left: 70px;
  }

  .stroke {
    width: 60px;
    height: 1px;
    margin-left: 2px;
    background: #111;
  }

  .weight {
    width: 124px;
  }

  .weight .stroke {
    width: 35px;
  }

  .weight select {
    padding-left: 45px;
  }

  .plot {
    width: 150px;
    background: #cbcbcb;
  }

  .plot select {
    padding-left: 10px;
    color: #808080;
  }

  main {
    display: flex;
    flex: 1;
    gap: 4px;
    min-height: 0;
    padding: 0 6px 0 3px;
    margin-top: 1px;
  }

  .side {
    display: flex;
    flex: none;
    flex-direction: column;
    align-items: center;
    align-self: flex-start;
    box-sizing: border-box;
    width: 25px;
    border: 1px solid var(--dark);
  }

  .side .tool {
    width: 23px;
  }

  .side .marked {
    box-shadow: inset 0 0 0 3px var(--red);
  }

  .canvas {
    position: relative;
    flex: 1;
    min-width: 0;
    background: #000;
  }

  .ucs {
    position: absolute;
    bottom: 7px;
    left: 9px;
  }

  .command {
    position: relative;
    display: flex;
    flex: none;
    margin: 2px 3px 0;
    border: 1px solid var(--dark);
    background: #c8c8c8;
  }

  .command-side {
    display: flex;
    flex: none;
    flex-direction: column;
    align-items: center;
    gap: 8px;
    width: 24px;
    padding-top: 2px;
    background: #2b323d;
  }

  .command-side .grip {
    --gap: #2b323d;
    width: 18px;
    height: 6px;
    margin-bottom: 0;
  }

  .command-main {
    flex: 1;
    min-width: 0;
    color: #222;
    font: 12px/15px 'DejaVu Sans Mono', 'Noto Sans CJK SC', monospace;
  }

  .history {
    padding: 5px 2px 3px;
  }

  .history p {
    margin: 0;
    height: 15px;
    white-space: pre;
  }

  .history span {
    font-size: 13px;
  }

  .entry-line {
    display: flex;
    align-items: center;
    height: 20px;
    padding-left: 4px;
    border-top: 1px solid var(--dark);
    background: #fff;
  }

  .recent {
    margin: 0 3px;
    color: #555;
  }

  .entry-line input {
    flex: 1;
    min-width: 0;
  }

  .command-frame {
    inset: 35px auto -4px 23px;
    z-index: 2;
    width: 276px;
  }

  footer {
    display: flex;
    flex: none;
    justify-content: space-between;
    height: 28px;
    margin: 0 3px 3px;
    background: var(--dark);
  }

  .layouts {
    display: flex;
    gap: 4px;
    padding-left: 12px;
  }

  .layout {
    width: 50px;
    height: 17px;
    border-radius: 2px 2px 10px 14px;
    background: #2c3440;
    color: #b4b8be;
  }

  .layout.current {
    width: 44px;
    background: var(--frame);
    color: #fff;
    font-weight: 700;
  }

  .layout.add {
    width: 22px;
    margin-left: 4px;
    font-size: 15px;
  }

  .status {
    display: flex;
    gap: 3px;
    padding: 1px 2px 0 0;
  }

  .group {
    display: flex;
    gap: 1px;
    height: 24px;
    background: var(--frame);
  }

  .cell {
    width: 23px;
    height: 24px;
    padding-right: 1px;
  }

  .cell.on {
    background: #5e8fc4;
    color: #fff;
  }

  .group .drop {
    width: 14px;
  }

  .ratio {
    width: 18px;
    color: #eee;
  }

  .note {
    position: absolute;
    z-index: 20;
    color: var(--red);
    font-size: 16px;
    line-height: 24px;
    white-space: nowrap;
    pointer-events: none;
  }

  .note path {
    fill: var(--red);
  }

  .note-menu {
    top: 255px;
    left: 766px;
  }

  .note-menu span {
    display: block;
    padding: 8px 0 0 38px;
  }

  .note-tool {
    top: 199px;
    right: 36px;
  }

  .note-tool span {
    display: block;
    padding-top: 11px;
    margin: 0 40px 0 -54px;
    text-align: right;
  }

  .note-command {
    bottom: 68px;
    left: 195px;
  }

  .note-command span {
    display: block;
    padding: 0 0 10px 36px;
  }
</style>
